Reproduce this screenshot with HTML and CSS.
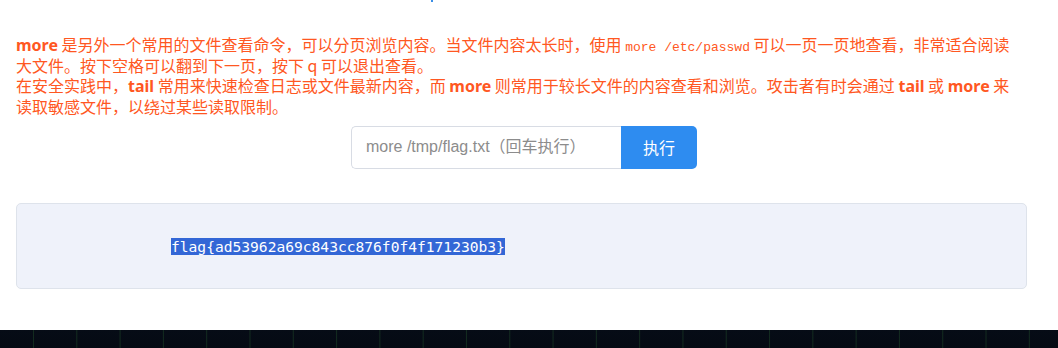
FILE: index.html
```html
<!DOCTYPE html>
<html lang="zh-CN">
<head>
<meta charset="utf-8">
<title>more</title>
<link rel="stylesheet" href="styles.css">
</head>
<body>
<span class="top-mark"></span>
<main class="page">
  <section class="intro">
    <p><b>more</b> 是另外一个常用的文件查看命令，可以分页浏览内容。当文件内容太长时，使用 <code>more /etc/passwd</code> 可以一页一页地查看，非常适合阅读大文件。按下空格可以翻到下一页，按下 q 可以退出查看。</p>
    <p>在安全实践中，<b>tail</b> 常用来快速检查日志或文件最新内容，而 <b>more</b> 则常用于较长文件的内容查看和浏览。攻击者有时会通过 <b>tail</b> 或 <b>more</b> 来读取敏感文件，以绕过某些读取限制。</p>
  </section>
  <form class="cmd-row" onsubmit="return false">
    <input class="cmd-input" type="text" placeholder="more /tmp/flag.txt（回车执行）">
    <button class="cmd-btn" type="button">执行</button>
  </form>
  <section class="output">
    <pre class="output-text"><span class="sel">flag{ad53962a69c843cc876f0f4f171230b3}</span></pre>
  </section>
</main>
<footer class="band"></footer>
</body>
</html>
```
FILE: styles.css
```css
html, body {
  margin: 0;
  padding: 0;
  background: #ffffff;
}
body {
  font-family: "Noto Sans CJK SC", sans-serif;
  overflow: hidden;
  position: relative;
}
.top-mark {
  position: absolute;
  left: 431px;
  top: 0;
  width: 2px;
  height: 2px;
  background: #3a8ee6;
}
.page {
  width: 1011px;
  margin-left: 16px;
  padding-top: 34px;
}
.intro {
  color: #ff5722;
  font-family: "Noto Sans CJK SC", sans-serif;
  font-size: 16px;
  line-height: 20.7px;
  padding-right: 12px;
}
.intro p {
  margin: 0;
}
.intro b {
  font-family: "Noto Sans", "Noto Sans CJK SC", sans-serif;
  font-weight: 700;
  line-height: 1;
  vertical-align: baseline;
}
.intro code {
  font-family: "Liberation Mono", monospace;
  font-size: 13px;
  line-height: 1;
}
.cmd-row {
  display: flex;
  justify-content: center;
  margin-top: 9px;
  padding-left: 5px;
}
.cmd-input {
  box-sizing: border-box;
  width: 270px;
  height: 43px;
  border: 1px solid #d8dce4;
  border-right: none;
  border-radius: 5px 0 0 5px;
  padding: 0 14px;
  font-family: "Liberation Sans", "Noto Sans CJK SC", sans-serif;
  font-size: 16px;
  color: #333;
  outline: none;
}
.cmd-input::placeholder {
  color: #8c8c8c;
}
.cmd-btn {
  width: 76px;
  height: 43px;
  border: none;
  border-radius: 0 5px 5px 0;
  background: #2e8cf0;
  color: #ffffff;
  font-family: "Noto Sans CJK SC", sans-serif;
  font-size: 16px;
  padding: 0;
}
.output {
  margin-top: 34px;
  height: 84px;
  background: #eff2fa;
  border: 1px solid #dee3eb;
  border-radius: 5px;
}
.output-text {
  margin: 0;
  padding: 34px 0 0 154px;
  font-family: "DejaVu Sans Mono", monospace;
  font-size: 14.6px;
  line-height: 17px;
}
.sel {
  background: #3367d6;
  color: #ffffff;
}
.band {
  margin-top: 41px;
  height: 60px;
  background-color: #040912;
  background-image:
    linear-gradient(to right, rgba(30, 70, 40, 0.55) 1px, transparent 1px),
    linear-gradient(to bottom, #060c16, #02060c);
  background-size: 43.3px 100%, 100% 100%;
  background-position: 33px 0, 0 0;
}
```
